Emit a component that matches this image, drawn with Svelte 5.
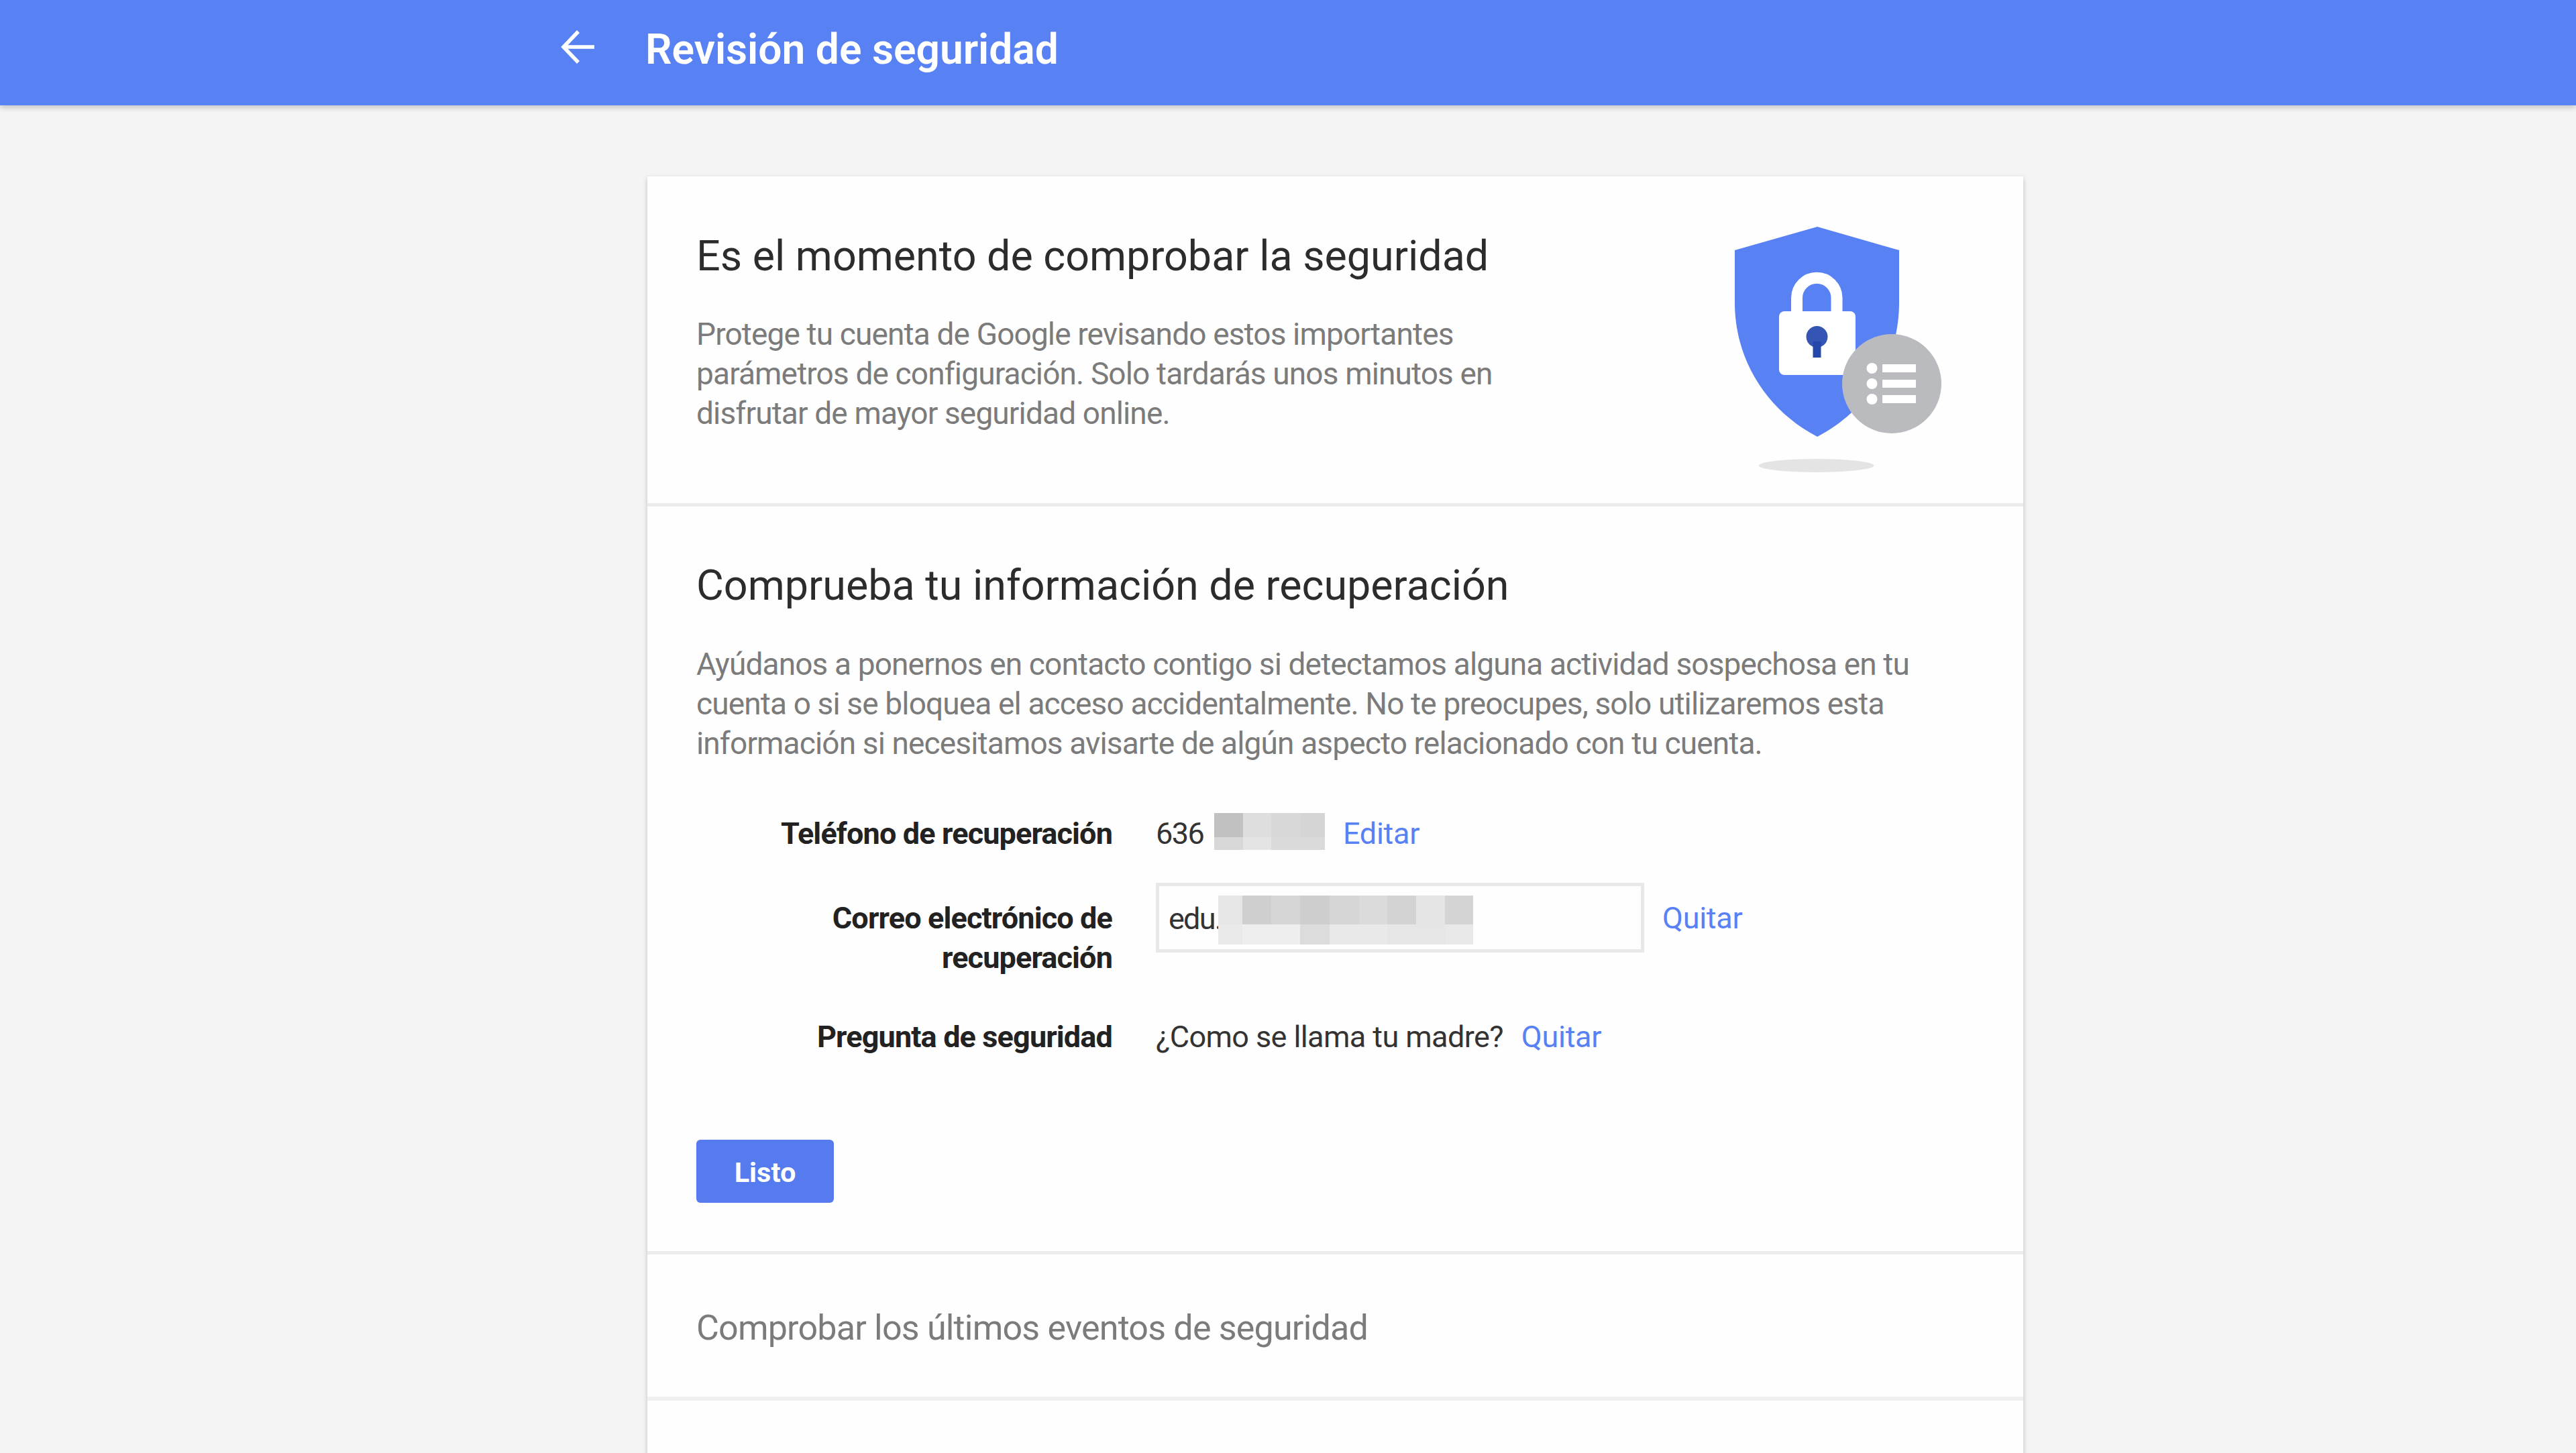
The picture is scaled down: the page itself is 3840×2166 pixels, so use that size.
<script>
  let email = 'edu.';

  // shades of the blocks that hide personal data
  const phoneMask = [
    ['#c1c1c1', '#dedede', '#d8d8d8', '#d5d5d5'],
    ['#d8d8d8', '#e4e4e4', '#dadada', '#dadada'],
  ];
  const emailMask = [
    ['#e6e6e6', '#cfcfcf', '#d6d6d6', '#cecece', '#d6d6d6', '#dbdbdb', '#d3d3d3', '#e5e5e5', '#d4d4d4'],
    ['#eaeaea', '#eeeeee', '#eeeeee', '#dcdcdc', '#e9e9e9', '#e9e9e9', '#e6e6e6', '#e6e6e6', '#e9e9e9'],
  ];
</script>

<header class="bar">
  <svg class="bar__back" viewBox="0 0 52 52">
    <path d="M50 26H5M26 3L4 26L26 49" fill="none" stroke="#fff" stroke-width="5.5" />
  </svg>
  <h1 class="bar__title">Revisión de seguridad</h1>
</header>

<main class="card">
  <section class="intro">
    <div>
      <h2 class="title">Es el momento de comprobar la seguridad</h2>
      <p class="text text--intro">
        Protege tu cuenta de Google revisando estos importantes<br />
        parámetros de configuración. Solo tardarás unos minutos en<br />
        disfrutar de mayor seguridad online.
      </p>
    </div>
    <svg class="shield" viewBox="0 0 310 370">
      <ellipse cx="121.5" cy="357" rx="86" ry="10" fill="#e4e4e4" />
      <path d="M123 1L245 36V114C245 200 198 275 123 314C48 275 0 200 0 114V36Z" fill="#5881f4" />
      <path d="M92.5 132V107a29.75 29.75 0 0 1 59.5 0V132" fill="none" stroke="#fff" stroke-width="17" />
      <rect x="66" y="127" width="114" height="95" rx="8" fill="#fff" />
      <circle cx="122.5" cy="165" r="16" fill="#3455b4" />
      <rect x="116.5" y="172" width="12" height="24" fill="#2447ac" />
      <circle cx="234" cy="235" r="74" fill="#b9bbbf" />
      <g fill="#fff">
        {#each [212, 235, 258] as y}
          <circle cx="204.5" cy={y} r="8" />
          <rect x="220" y={y - 6} width="50" height="12" />
        {/each}
      </g>
    </svg>
  </section>

  <section class="recovery">
    <h2 class="title">Comprueba tu información de recuperación</h2>
    <p class="text">
      Ayúdanos a ponernos en contacto contigo si detectamos alguna actividad sospechosa en tu<br />
      cuenta o si se bloquea el acceso accidentalmente. No te preocupes, solo utilizaremos esta<br />
      información si necesitamos avisarte de algún aspecto relacionado con tu cuenta.
    </p>

    <div class="row">
      <span class="row__label">Teléfono de recuperación</span>
      <span class="row__phone">636</span>
      <div class="mask mask--phone">
        {#each phoneMask.flat() as color}
          <i style="background: {color}"></i>
        {/each}
      </div>
      <a class="link" href="#editar">Editar</a>
    </div>
    <div class="row row--email">
      <span class="row__label">Correo electrónico de<br />recuperación</span>
      <div class="field">
        <span>{email}</span>
        <div class="mask mask--email">
          {#each emailMask.flat() as color}
            <i style="background: {color}"></i>
          {/each}
        </div>
      </div>
      <a class="link" href="#quitar">Quitar</a>
    </div>
    <div class="row row--question">
      <span class="row__label">Pregunta de seguridad</span>
      <span class="row__question">¿Como se llama tu madre?</span>
      <a class="link" href="#quitar">Quitar</a>
    </div>

    <button class="button">Listo</button>
  </section>

  <section class="events">Comprobar los últimos eventos de seguridad</section>
</main>

<style>
  :global(body) {
    background: #f4f4f4;
    height: 2166px;
    overflow: hidden;
    font-family: Roboto, sans-serif;
  }
  h1,
  h2,
  p {
    margin: 0;
  }
  .bar {
    display: flex;
    align-items: center;
    box-sizing: border-box;
    height: 157px;
    padding: 0 0 9px 836px;
    background: #5881f4;
    box-shadow: 0 3px 8px rgba(0, 0, 0, 0.22);
  }
  .bar__back {
    width: 52px;
    height: 52px;
    margin: 0 74px 8px 0;
  }
  .bar__title {
    color: #fff;
    font-size: 62.3px;
    font-weight: 600;
    line-height: 80px;
    white-space: nowrap;
  }
  .card {
    width: 2051px;
    height: 2000px;
    margin: 106px 0 0 965px;
    background: #fefefe;
    box-shadow: 0 3px 7px rgba(0, 0, 0, 0.22);
  }
  .intro {
    display: flex;
    justify-content: space-between;
    box-sizing: border-box;
    height: 492px;
    padding: 79px 120px 0 73px;
    border-bottom: 5px solid #ececec;
  }
  .shield {
    width: 310px;
    height: 370px;
    margin-top: -5px;
  }
  .title {
    color: #2c2c2c;
    font-size: 62.8px;
    font-weight: 400;
    line-height: 80px;
    white-space: nowrap;
  }
  .text {
    margin-top: 48px;
    color: #7b7b7b;
    font-size: 46px;
    line-height: 58.8px;
    letter-spacing: -0.86px;
    white-space: nowrap;
  }
  .text--intro {
    margin-top: 47px;
  }
  .recovery {
    box-sizing: border-box;
    height: 1115px;
    padding: 78px 73px 0;
    border-bottom: 5px solid #ececec;
  }
  .row {
    display: flex;
    align-items: flex-start;
    margin-top: 76px;
    color: #333;
    font-size: 45px;
    line-height: 59px;
    letter-spacing: -0.6px;
    white-space: nowrap;
  }
  .row--email {
    margin-top: 44px;
  }
  .row--question {
    margin-top: 59px;
  }
  .row__label {
    width: 620px;
    margin-right: 65px;
    color: #222;
    text-align: right;
    font-weight: 700;
    letter-spacing: -0.87px;
  }
  .row--email .row__label,
  .row--email .link {
    padding-top: 23px;
  }
  .row__phone {
    width: 87px;
    letter-spacing: -1.5px;
  }
  .mask {
    display: grid;
  }
  .mask--phone {
    grid-template: 36px 19px / 43px 42px 43px 37px;
    margin-top: -1px;
  }
  .mask--email {
    grid-template: 43px 30px / 36px 43px 43px 44px 44px 42px 43px 43px 42px;
    margin-top: 14px;
  }
  .link {
    margin-left: 27px;
    color: #5881f4;
    letter-spacing: -0.3px;
    text-decoration: none;
  }
  .field {
    display: flex;
    box-sizing: border-box;
    width: 728px;
    height: 104px;
    padding-left: 14px;
    border: 5px solid #e8e8e8;
  }
  .field span {
    width: 74px;
    padding-top: 19px;
    letter-spacing: -1.8px;
  }
  .button {
    display: block;
    width: 205px;
    height: 94px;
    margin-top: 124px;
    padding: 0;
    border: none;
    border-radius: 6px;
    background: #557bee;
    color: #fff;
    font: 700 41.5px/97px Roboto, sans-serif;
  }
  .events {
    box-sizing: border-box;
    height: 218px;
    padding: 0 73px;
    border-bottom: 6px solid #f0f0f0;
    color: #7b7b7b;
    font-size: 52px;
    line-height: 220px;
    letter-spacing: -0.8px;
    white-space: nowrap;
  }
</style>
